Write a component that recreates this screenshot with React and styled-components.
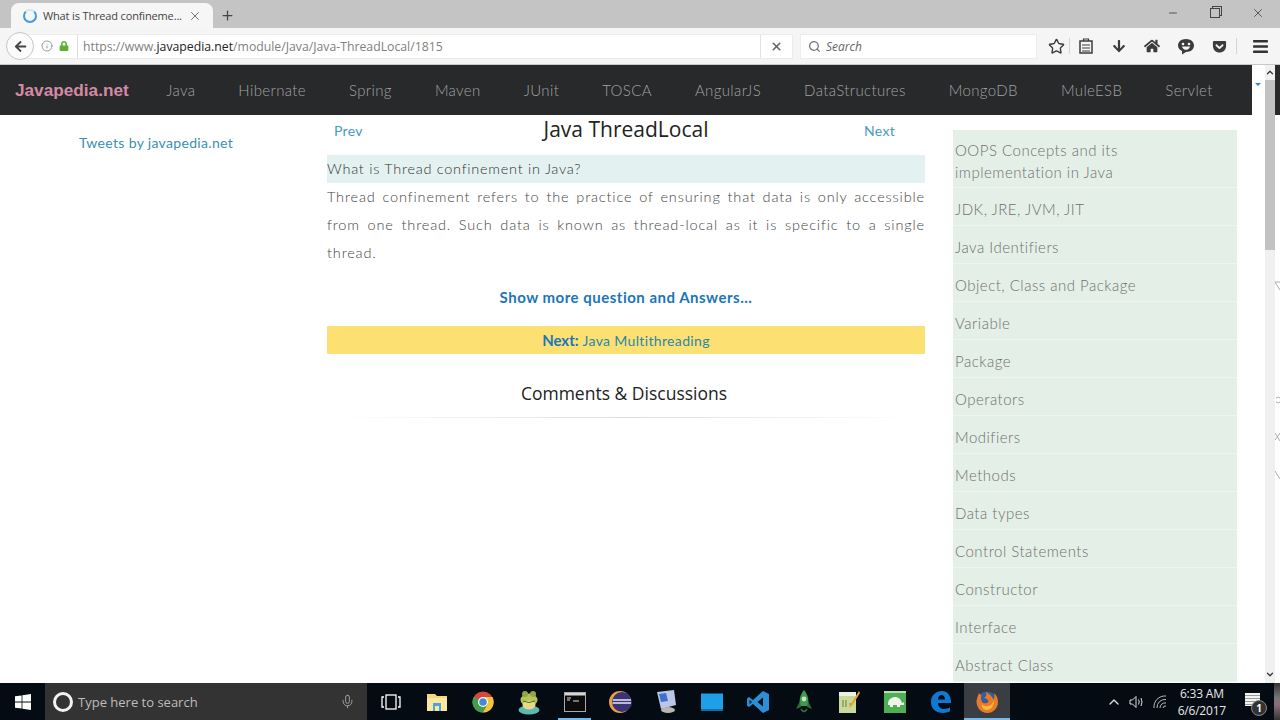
import React from 'react'
import styled, { createGlobalStyle } from 'styled-components'
import { FaArrowLeft, FaArrowDown, FaHome, FaLock, FaGetPocket, FaBars } from 'react-icons/fa'
import { Search, Star, X, Plus, Info, Minus, Mic, ChevronUp, ChevronDown } from 'lucide-react'

const GlobalStyle = createGlobalStyle`
  html, body { margin:0; padding:0; height:100%; overflow:hidden; background:#fff; }
  #root { height:100%; }
  * { box-sizing:border-box; }
`

const navItems = ['Java','Hibernate','Spring','Maven','JUnit','TOSCA','AngularJS','DataStructures','MongoDB','MuleESB','Servlet']
const topics = ['JDK, JRE, JVM, JIT','Java Identifiers','Object, Class and Package','Variable','Package','Operators','Modifiers','Methods','Data types','Control Statements','Constructor','Interface','Abstract Class']

function WinLogo() {
  return (
    <svg width="16" height="16" viewBox="0 0 16 16" fill="#fff">
      <path d="M0 2.3 6.6 1.4V7.6H0ZM7.4 1.3 16 0V7.6H7.4ZM0 8.4H6.6V14.6L0 13.7ZM7.4 8.4H16V16L7.4 14.7Z" />
    </svg>
  )
}

function TaskView() {
  return (
    <svg width="20" height="18" viewBox="0 0 20 18" fill="none" stroke="#fff" strokeWidth="1.3">
      <rect x="5" y="2" width="10" height="14" />
      <path d="M3 4H1V14H3M17 4H19V14H17" />
    </svg>
  )
}

function FolderIcon() {
  return (
    <svg width="22" height="20" viewBox="0 0 22 20">
      <path d="M1 2H9L11 4H21V19H1Z" fill="#f6d77f" />
      <rect x="1" y="6" width="20" height="13" fill="#fbe6a2" />
      <rect x="7" y="11" width="8" height="8" fill="#4aa6d8" />
      <rect x="9" y="14" width="4" height="5" fill="#fbe6a2" />
    </svg>
  )
}

function ChromeIcon() {
  return (
    <svg width="22" height="22" viewBox="0 0 22 22">
      <circle cx="11" cy="11" r="10.5" fill="#d9473a" />
      <path d="M11 11 1.9 5.7A10.5 10.5 0 0 0 11 21.5L16.2 12Z" fill="#3f9f4d" />
      <path d="M11 6H20.5A10.5 10.5 0 0 1 11 21.5L15.6 13Z" fill="#f4c534" />
      <circle cx="11" cy="11" r="5" fill="#fff" />
      <circle cx="11" cy="11" r="3.8" fill="#4a86d8" />
    </svg>
  )
}

function FrogIcon() {
  return (
    <svg width="24" height="26" viewBox="0 0 24 26">
      <ellipse cx="12" cy="21" rx="10.5" ry="4.5" fill="#5fb8b0" />
      <ellipse cx="12" cy="11" rx="8.5" ry="6.5" fill="#b4c455" />
      <ellipse cx="12" cy="16" rx="6.5" ry="4.5" fill="#e7d987" />
      <circle cx="8" cy="5" r="3" fill="#8fa845" />
      <circle cx="16" cy="5" r="3" fill="#8fa845" />
      <path d="M6 12Q12 15 18 12" stroke="#4d6a2a" fill="none" />
    </svg>
  )
}

function TerminalIcon() {
  return (
    <svg width="22" height="20" viewBox="0 0 22 20">
      <rect x="0.5" y="0.5" width="21" height="19" fill="#0b0b0b" stroke="#aaa" />
      <rect x="1" y="1" width="20" height="2.5" fill="#d5d5d5" />
      <path d="M3 6H7M3 8H6M9 9H15" stroke="#ddd" strokeWidth="1.2" />
    </svg>
  )
}

function EclipseIcon() {
  return (
    <svg width="24" height="24" viewBox="0 0 24 24">
      <circle cx="12" cy="12" r="11" fill="#e9a24a" />
      <circle cx="14" cy="12" r="10" fill="#3a3472" />
      <path d="M5 10H23M4.5 13H23" stroke="#e8e6f4" strokeWidth="1.6" />
    </svg>
  )
}

function ComputerIcon() {
  return (
    <svg width="22" height="26" viewBox="0 0 22 26">
      <path d="M2 3 19 1 21 16 6 20Z" fill="#b9c6e6" />
      <path d="M4 5 11 4 13 12 6 13Z" fill="#3e6fd0" />
      <ellipse cx="13" cy="21" rx="7" ry="3" fill="#b8b8b0" />
    </svg>
  )
}

function BlueBox() {
  return (
    <svg width="22" height="18" viewBox="0 0 22 18">
      <rect width="22" height="17" y="0.5" fill="#1e9fe8" />
      <rect width="22" height="2" y="16" fill="#0f6fae" />
    </svg>
  )
}

function VsIcon() {
  return (
    <svg width="24" height="24" viewBox="0 0 24 24">
      <path d="M17 1 23 4V20L17 23 7 14 3 17 1 15.5V8.5L3 7 7 10ZM17 7.5 11.5 12 17 16.5Z" fill="#2b8fd6" />
      <path d="M3.5 9.5V14.5L6 12Z" fill="#0b2c4a" />
    </svg>
  )
}

function RocketIcon() {
  return (
    <svg width="20" height="26" viewBox="0 0 20 26">
      <path d="M10 1C14 6 15 10 14 17H6C5 10 6 6 10 1Z" fill="#3f9a4f" />
      <circle cx="10" cy="10" r="2.4" fill="#bde6c2" />
      <path d="M6 12 2 20 7 18ZM14 12 18 20 13 18Z" fill="#2c6f3a" />
      <path d="M7 20Q10 25 13 20" fill="none" stroke="#2c6f3a" strokeWidth="1.5" />
    </svg>
  )
}

function NotepadIcon() {
  return (
    <svg width="22" height="24" viewBox="0 0 22 24">
      <rect x="1" y="2" width="17" height="21" fill="#c9d99a" />
      <rect x="1" y="2" width="17" height="4" fill="#eef0e2" />
      <path d="M5 10V17M8 10V17M11 14H14" stroke="#6b7a45" />
      <path d="M21 1 12 15 11 18 14 16 22 3Z" fill="#e1a53a" />
    </svg>
  )
}

function TurtleIcon() {
  return (
    <svg width="22" height="22" viewBox="0 0 22 22">
      <rect width="22" height="22" fill="#4dae55" />
      <path d="M0 0H22V2H0Z" fill="#b6dfb6" />
      <path d="M4 13C4 8 8 6 11 6S17 8 18 12L20 11 20 14H4Z" fill="#eef5e8" />
      <path d="M6 14H9V16H6ZM13 14H16V16H13Z" fill="#eef5e8" />
    </svg>
  )
}

function EdgeIcon() {
  return (
    <svg width="22" height="23" viewBox="0 0 22 23">
      <path d="M1 12C1 5 6 1 12 1 18 1 21 6 21 13H8C8 17 11 19 14 19 16.5 19 18.5 18.3 20 17.3V21.3C18 22.4 15.5 23 13 23 6 23 1 19 1 12ZM8 9.5H15C15 6.5 13.5 5 11.5 5 9.5 5 8 6.8 8 9.5Z" fill="#0f78d4" />
    </svg>
  )
}

function FirefoxIcon() {
  return (
    <svg width="24" height="24" viewBox="0 0 24 24">
      <circle cx="12" cy="12" r="10.5" fill="#2f5f9e" />
      <path d="M4 3C3 6 2 8 1.5 11 1.5 18 6 23 12.5 23 18.5 23 23 18 23 12 23 8 21.5 5 19 3 20 6 19.5 8 18.5 9.5 17 6 14.5 4 11 2 12 5 11 7 9 8 11 8 13 9.5 13.5 11.5 12.5 13.5 9.5 14 7.5 12.5 6 11 5.5 8 6.5 5 5.5 5 4.5 4 4 3Z" fill="#ea7a28" />
      <path d="M7 14C9 17 14 17 17 14 19 11 18.5 9.5 18.5 9.5 20 14 17 20 12 20 8.5 20 6 17.5 7 14Z" fill="#f6b73c" />
    </svg>
  )
}

function SpeakerIcon() {
  return (
    <svg width="16" height="14" viewBox="0 0 16 14" fill="none" stroke="#ddd" strokeWidth="1">
      <path d="M1 5H3.5L7 1.5V12.5L3.5 9H1Z" />
      <path d="M9.5 4.5Q11 7 9.5 9.5M12 3Q14 7 12 11" />
    </svg>
  )
}

function WifiIcon() {
  return (
    <svg width="16" height="14" viewBox="0 0 16 14" fill="none" stroke="#bbb" strokeWidth="1">
      <path d="M2 13A11 11 0 0 1 14 1M5 13A8 8 0 0 1 14 4.5M8 13A5 5 0 0 1 14 8M11 13A2.5 2.5 0 0 1 14 11" />
    </svg>
  )
}

function SmileBubble() {
  return (
    <svg width="18" height="17" viewBox="0 0 18 17">
      <path d="M9 1C13.7 1 17 3.8 17 7.5S13.7 14 9 14L5 16.5V13C2.6 12 1 10 1 7.5 1 3.8 4.3 1 9 1Z" fill="#3b3b3b" />
      <circle cx="6" cy="6" r="1.3" fill="#f5f5f5" />
      <circle cx="12" cy="6" r="1.3" fill="#f5f5f5" />
      <path d="M5 8.5H13C12.5 11 10.5 11.8 9 11.8S5.5 11 5 8.5Z" fill="#f5f5f5" />
    </svg>
  )
}

function ListIcon() {
  return (
    <svg width="14" height="16" viewBox="0 0 14 16" fill="none" stroke="#3b3b3b" strokeWidth="1.5">
      <rect x="1" y="3" width="12" height="12" />
      <path d="M4.5 3V1H9.5V3M3 7H11M3 10H11M3 13H11" strokeWidth="1.2" />
    </svg>
  )
}

function Sliver() {
  return (
    <svg width="5" height="380" viewBox="0 0 5 380" fill="none" stroke="#aaa">
      <path d="M0 167H5M0 167 5 175" />
      <path d="M1 283Q4 281 5 283M1 287Q4 289 5 287" />
      <path d="M0 325 5 318M0 318 5 326" />
      <path d="M0 356 5 364" />
    </svg>
  )
}

export default function App() {
  return (
    <Screen>
      <GlobalStyle />
      <TabStrip>
        <Tab>
          <Spinner />
          <TabTitle>What is Thread confineme...</TabTitle>
          <TabClose><X size={14} strokeWidth={1.4} color="#555" /></TabClose>
        </Tab>
        <NewTab><Plus size={15} strokeWidth={2} color="#444" /></NewTab>
        <WindowControls>
          <Minus size={12} color="#555" />
          <RestoreBox />
          <X size={14} strokeWidth={1.3} color="#333" />
        </WindowControls>
      </TabStrip>

      <Toolbar>
        <BackButton><FaArrowLeft size={13} color="#444" /></BackButton>
        <UrlBar>
          <Info size={12} color="#999" />
          <FaLock size={10} color="#5cb230" />
          <UrlText>
            https://www.<b>javapedia.net</b>/module/Java/Java-ThreadLocal/1815
          </UrlText>
          <StopButton><X size={13} strokeWidth={3} color="#666" /></StopButton>
        </UrlBar>
        <SearchBar>
          <Search size={13} color="#777" strokeWidth={2.4} />
          <span>Search</span>
        </SearchBar>
        <ToolIcons>
          <ToolSlot $w={26}><Star size={17} strokeWidth={2} color="#3b3b3b" /></ToolSlot>
          <ToolDivider />
          <ToolSlot $w={32}><ListIcon /></ToolSlot>
          <ToolSlot $w={33.5}><FaArrowDown size={14} color="#3b3b3b" /></ToolSlot>
          <ToolSlot $w={33.5}><FaHome size={16} color="#3b3b3b" /></ToolSlot>
          <ToolSlot $w={33.5}><SmileBubble /></ToolSlot>
          <ToolSlot $w={33.5}><FaGetPocket size={15} color="#3b3b3b" /></ToolSlot>
          <ToolDivider $gap={9} />
          <ToolSlot $w={29}><FaBars size={17} color="#333" /></ToolSlot>
        </ToolIcons>
      </Toolbar>

      <PageRow>
        <PageMain>
          <TopRow>
            <Navbar>
              <Brand>Javapedia.net</Brand>
              <NavList>
                {navItems.map((n) => <NavLink key={n}>{n}</NavLink>)}
              </NavList>
            </Navbar>
            <Caret />
          </TopRow>
          <Body>
            <TweetCol><TweetLink>Tweets by javapedia.net</TweetLink></TweetCol>
            <Article>
              <TitleRow>
                <PrevLink>Prev</PrevLink>
                <Title>Java ThreadLocal</Title>
                <NextLink>Next</NextLink>
              </TitleRow>
              <Question>What is Thread confinement in Java?</Question>
              <Answer>
                Thread confinement refers to the practice of ensuring that data is only accessible from one thread. Such data is known as thread-local as it is specific to a single thread.
              </Answer>
              <ShowMore>Show more question and Answers...</ShowMore>
              <NextBar><b>Next:</b> <span>Java Multithreading</span></NextBar>
              <Comments>Comments &amp; Discussions</Comments>
              <Fade />
            </Article>
            <Topics>
              <TopicRow>OOPS Concepts and its<br />implementation in Java</TopicRow>
              {topics.map((t) => <TopicRow key={t}>{t}</TopicRow>)}
            </Topics>
          </Body>
        </PageMain>
        <Scrollbar>
          <ScrollArrow><ChevronUp size={11} strokeWidth={3} color="#333" /></ScrollArrow>
          <Thumb />
          <ScrollArrow $down><ChevronDown size={11} strokeWidth={3} color="#333" /></ScrollArrow>
        </Scrollbar>
        <NextWindow>
          <NextWindowBand />
          <Sliver />
        </NextWindow>
      </PageRow>

      <Taskbar>
        <StartButton><WinLogo /></StartButton>
        <SearchBox>
          <Cortana />
          <SearchHint>Type here to search</SearchHint>
          <Mic size={15} strokeWidth={1.4} color="#aaa" />
        </SearchBox>
        <TaskList>
          <TaskItem><TaskView /></TaskItem>
          <TaskItem><FolderIcon /></TaskItem>
          <TaskItem><ChromeIcon /></TaskItem>
          <TaskItem><FrogIcon /></TaskItem>
          <TaskItem $open><TerminalIcon /></TaskItem>
          <TaskItem><EclipseIcon /></TaskItem>
          <TaskItem><ComputerIcon /></TaskItem>
          <TaskItem><BlueBox /></TaskItem>
          <TaskItem><VsIcon /></TaskItem>
          <TaskItem><RocketIcon /></TaskItem>
          <TaskItem><NotepadIcon /></TaskItem>
          <TaskItem><TurtleIcon /></TaskItem>
          <TaskItem><EdgeIcon /></TaskItem>
          <TaskItem $active><FirefoxIcon /></TaskItem>
        </TaskList>
        <Tray>
          <ChevronUp size={16} strokeWidth={2} color="#ddd" />
          <SpeakerIcon />
          <WifiIcon />
          <Clock><span>6:33 AM</span><span>6/6/2017</span></Clock>
          <Notify>
            <NotifyPage />
            <NotifyBadge>1</NotifyBadge>
          </Notify>
          <Peek />
        </Tray>
      </Taskbar>
    </Screen>
  )
}

const Screen = styled.div`
  display:flex;
  flex-direction:column;
  width:1280px;
  height:720px;
  overflow:hidden;
  font-family:Lato, sans-serif;
`
const TabStrip = styled.div`
  display:flex;
  align-items:flex-end;
  height:28px;
  flex:none;
  padding-left:11px;
  background:#c4c4c4;
`
const Tab = styled.div`
  display:flex;
  align-items:center;
  width:202px;
  height:25px;
  padding:0 11px 0 12px;
  background:#f6f6f6;
  border-radius:8px 8px 0 0;
`
const Spinner = styled.div`
  width:14px;
  height:14px;
  margin-right:6px;
  flex:none;
  border:2px solid #3d9be0;
  border-top-color:#d5e4ef;
  border-radius:50%;
`
const TabTitle = styled.span`
  flex:none;
  font:11px "Open Sans", sans-serif;
  letter-spacing:-0.15px;
  color:#444;
  white-space:nowrap;
`
const TabClose = styled.span`
  display:flex;
  margin-left:auto;
`
const NewTab = styled.div`
  display:flex;
  align-items:center;
  height:25px;
  margin-left:7px;
`
const WindowControls = styled.div`
  display:flex;
  align-items:center;
  gap:31px;
  align-self:flex-start;
  height:26px;
  margin-left:auto;
  padding-right:15px;
`
const RestoreBox = styled.div`
  width:10px;
  height:10px;
  border:1px solid #444;
  box-shadow:2px -2px 0 -1px #c4c4c4, 2px -2px 0 0 #444;
`
const Toolbar = styled.div`
  display:flex;
  align-items:center;
  height:37px;
  flex:none;
  padding-left:6px;
  background:#f5f5f5;
  border-bottom:1px solid #c8c8c8;
`
const BackButton = styled.div`
  display:flex;
  align-items:center;
  justify-content:center;
  width:28px;
  height:28px;
  margin-right:-8px;
  flex:none;
  background:#fbfbfb;
  border:1px solid #c6c6c6;
  border-radius:50%;
  position:relative;
  z-index:1;
`
const UrlBar = styled.div`
  display:flex;
  align-items:center;
  width:767px;
  height:25px;
  padding-left:14px;
  background:#fff;
  border:1px solid #ececec;
  gap:6px;
`
const UrlText = styled.div`
  flex:1;
  margin-left:2px;
  height:100%;
  font:12.25px/24px "Open Sans", sans-serif;
  color:#808080;
  white-space:nowrap;
  border-left:1px solid #ddd;
  padding-left:5px;
  b { font-weight:400; color:#222; }
`
const StopButton = styled.div`
  display:flex;
  align-items:center;
  justify-content:center;
  align-self:stretch;
  width:32px;
  border-left:1px solid #e2e2e2;
`
const SearchBar = styled.div`
  display:flex;
  align-items:center;
  gap:5px;
  width:237px;
  height:25px;
  margin-left:7px;
  padding-left:7px;
  background:#fff;
  border:1px solid #ececec;
  span {
    font:italic 12px "Open Sans", sans-serif;
    color:#666;
  }
`
const ToolIcons = styled.div`
  display:flex;
  align-items:center;
  height:100%;
  margin-left:6px;
`
const ToolSlot = styled.div`
  display:flex;
  align-items:center;
  justify-content:center;
  width:${(p) => p.$w}px;
`
const ToolDivider = styled.div`
  width:1px;
  height:16px;
  margin-right:${(p) => p.$gap || 0}px;
  background:#d5d5d5;
`
const PageRow = styled.div`
  display:flex;
  flex:1;
  min-height:0;
  background:#fff;
`
const PageMain = styled.div`
  width:1265px;
  flex:none;
  overflow:hidden;
`
const TopRow = styled.div`
  display:flex;
  align-items:flex-start;
`
const Navbar = styled.nav`
  display:flex;
  align-items:center;
  width:1252px;
  height:50px;
  flex:none;
  padding-left:15px;
  background:#28292b;
`
const Brand = styled.div`
  font:bold 17.2px "Liberation Sans", sans-serif;
  color:#d48aa4;
`
const NavList = styled.div`
  display:flex;
  gap:43px;
  margin-left:37.5px;
`
const NavLink = styled.span`
  font-size:15px;
  font-weight:300;
  letter-spacing:0.37px;
  color:#a2a2a2;
`
const Caret = styled.div`
  width:0;
  height:0;
  margin:18px 0 0 3px;
  border-left:3px solid transparent;
  border-right:3px solid transparent;
  border-top:3px solid #2a88c8;
`
const Body = styled.div`
  display:grid;
  grid-template-columns:327px 598px 284px;
`
const TweetCol = styled.div`
  padding:17px 0 0 79px;
`
const TweetLink = styled.a`
  font-size:14px;
  line-height:18px;
  letter-spacing:0.33px;
  color:#3a8fb0;
`
const Article = styled.div`
  display:flex;
  flex-direction:column;
`
const TitleRow = styled.div`
  display:grid;
  grid-template-columns:1fr auto 1fr;
  align-items:center;
  height:40px;
  padding-bottom:14px;
`
const PrevLink = styled.a`
  font-size:14px;
  letter-spacing:0.3px;
  color:#4a9aba;
  padding:2px 0 0 7px;
`
const NextLink = styled(PrevLink)`
  justify-self:end;
  padding:2px 30px 0 0;
`
const Title = styled.h1`
  margin:0;
  font:400 21px "Open Sans", sans-serif;
  color:#222;
`
const Question = styled.div`
  height:28px;
  font-size:14.5px;
  font-weight:300;
  line-height:28px;
  letter-spacing:0.73px;
  color:#333;
  background:#e3f2f0;
`
const Answer = styled.p`
  margin:0;
  font-size:14.5px;
  font-weight:300;
  line-height:28px;
  letter-spacing:0.85px;
  text-align:justify;
  color:#444;
`
const ShowMore = styled.a`
  margin-top:20px;
  font-size:15px;
  line-height:20px;
  font-weight:700;
  letter-spacing:0.5px;
  text-align:center;
  color:#1b75bb;
`
const NextBar = styled.div`
  height:28px;
  margin-top:19px;
  font-size:15px;
  line-height:29px;
  text-align:center;
  background:#fde072;
  b { font-weight:700; color:#1b75bb; }
  span { font-size:14px; color:#2a87ad; letter-spacing:0.35px; }
`
const Comments = styled.h2`
  margin:26px 4px 0 0;
  font:400 17.5px/26px "Open Sans", sans-serif;
  text-align:center;
  color:#222;
`
const Fade = styled.div`
  height:1px;
  margin:11px 10px 0 10px;
  background:linear-gradient(to right, #fff, #ddd 50%, #fff);
`
const Topics = styled.div`
  margin:15px 0 0 28px;
  width:284px;
  background:#e4efe7;
`
const TopicRow = styled.div`
  padding:10px 2px 5px;
  font-size:15px;
  font-weight:300;
  line-height:22px;
  letter-spacing:0.5px;
  color:#707070;
  border-bottom:1px solid #eef5f0;
  &:first-child { padding:9px 2px 4px; }
`
const Scrollbar = styled.div`
  display:flex;
  flex-direction:column;
  width:10px;
  flex:none;
  background:#f0f0f0;
`
const ScrollArrow = styled.div`
  display:flex;
  justify-content:center;
  align-items:center;
  height:15px;
  margin-top:${(p) => (p.$down ? 'auto' : '0')};
  margin-bottom:${(p) => (p.$down ? '1px' : '0')};
`
const Thumb = styled.div`
  height:170px;
  background:#c2c2c2;
`
const NextWindow = styled.div`
  width:5px;
  flex:none;
`
const NextWindowBand = styled.div`
  height:50px;
  background:#2a2a2c;
`
const Taskbar = styled.div`
  display:flex;
  align-items:stretch;
  height:37px;
  flex:none;
  background:#050b12;
`
const StartButton = styled.div`
  display:flex;
  align-items:center;
  justify-content:center;
  width:45px;
`
const SearchBox = styled.div`
  display:flex;
  align-items:center;
  width:322px;
  padding:0 12px 0 8px;
  background:#333;
`
const Cortana = styled.div`
  width:20px;
  height:20px;
  flex:none;
  border:3px solid #f2f2f2;
  border-radius:50%;
`
const SearchHint = styled.span`
  flex:1;
  margin-left:5px;
  font:13px "Open Sans", sans-serif;
  color:#bdbdbd;
`
const TaskList = styled.div`
  display:flex;
  margin-left:1.5px;
`
const TaskItem = styled.div`
  position:relative;
  display:flex;
  align-items:center;
  justify-content:center;
  width:45.8px;
  background:${(p) => (p.$active ? '#3a3d42' : 'transparent')};
  &::after {
    content:'';
    display:${(p) => (p.$active || p.$open ? 'block' : 'none')};
    position:absolute;
    bottom:0;
    left:${(p) => (p.$active ? '0' : '6px')};
    right:${(p) => (p.$active ? '0' : '6px')};
    height:2px;
    background:#76b9ed;
  }
`
const Tray = styled.div`
  display:flex;
  align-items:center;
  flex:1;
  padding-left:96px;
  gap:7px;
`
const Clock = styled.div`
  display:flex;
  flex-direction:column;
  align-items:center;
  margin-left:3px;
  font:12px/17px "Open Sans", sans-serif;
  color:#e8e8e8;
  letter-spacing:-0.2px;
`
const Notify = styled.div`
  position:relative;
  width:22px;
  height:24px;
  margin-left:12px;
`
const NotifyPage = styled.div`
  width:15px;
  height:13px;
  margin-top:3px;
  background:repeating-linear-gradient(#f2f2f2 0 2px, #999 2px 3px);
`
const NotifyBadge = styled.span`
  position:absolute;
  right:0;
  bottom:-2px;
  width:16px;
  height:16px;
  border-radius:50%;
  font:bold 10px/14px "Open Sans", sans-serif;
  text-align:center;
  color:#fff;
  background:#333;
  border:1px solid #888;
`
const Peek = styled.div`
  align-self:stretch;
  width:6px;
  margin-left:auto;
  background:linear-gradient(#333, #777 40%, #8a6d7a 60%, #333);
`
